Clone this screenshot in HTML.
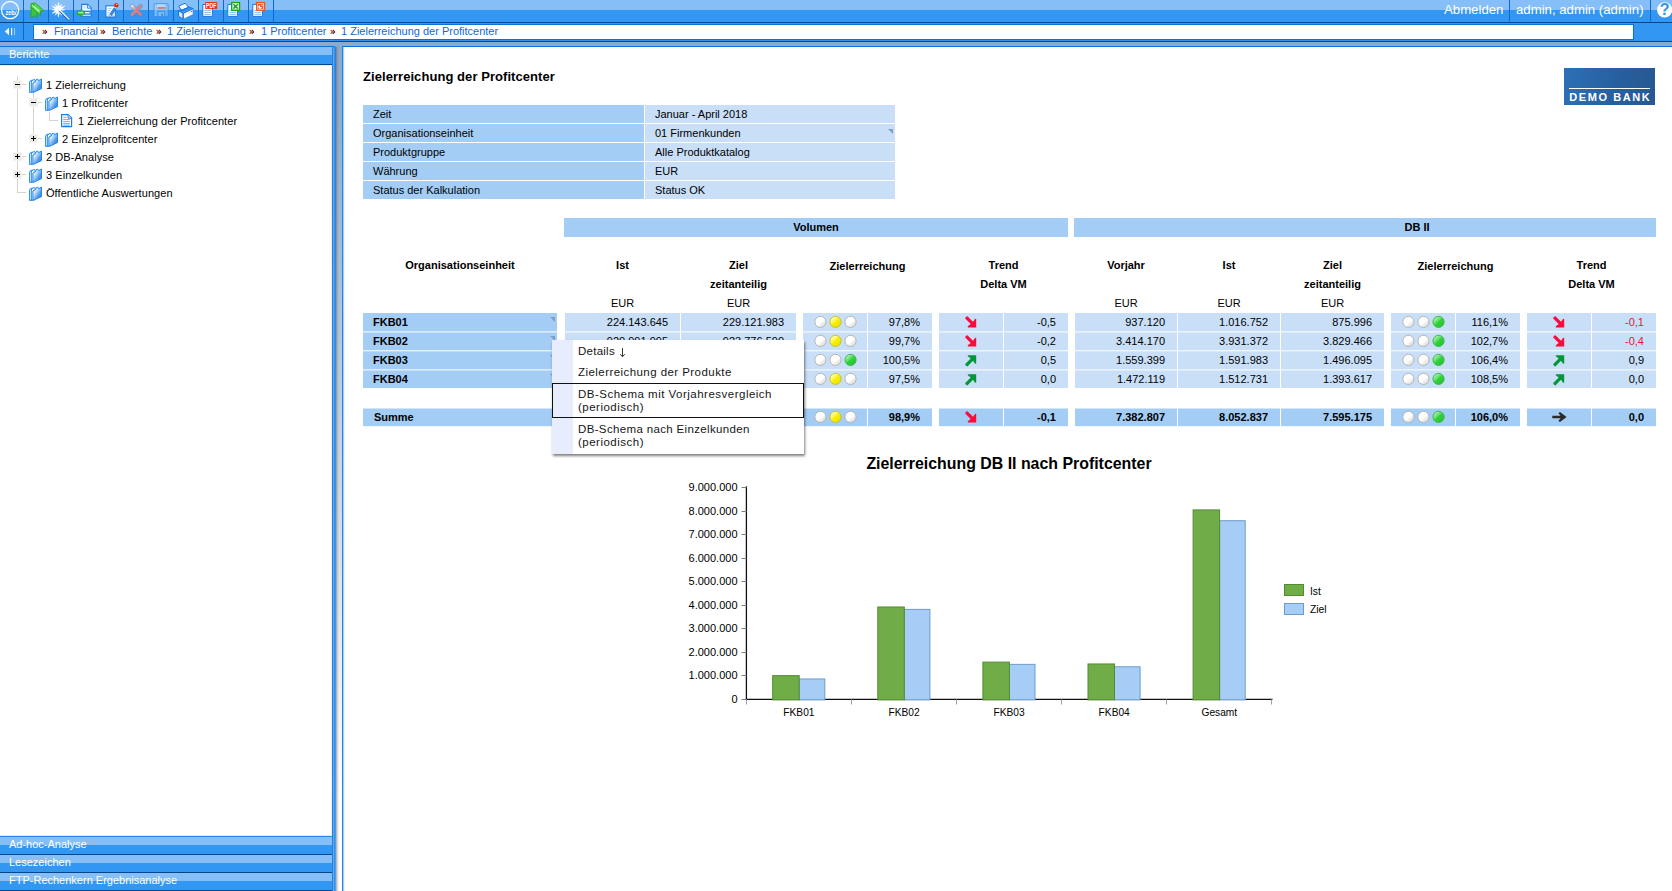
<!DOCTYPE html>
<html lang="de"><head><meta charset="utf-8"><title>Zielerreichung der Profitcenter</title>
<style>
html,body{margin:0;padding:0;}
body{width:1672px;height:891px;overflow:hidden;position:relative;background:#fff;font-family:"Liberation Sans",sans-serif;font-size:11px;color:#000;}
.abs{position:absolute;}
div,span{box-sizing:border-box;}
/* top bars */
#bar1{position:absolute;left:0;top:0;width:1672px;height:22px;background:#3197f2;}
#bar1 .lt{position:absolute;left:0;top:0;width:1672px;height:10px;background:#86bef7;}
#line1{position:absolute;left:0;top:22px;width:1672px;height:1px;background:#04468c;}
#bar2{position:absolute;left:0;top:23px;width:1672px;height:17px;background:#3197f2;}
#line2a{position:absolute;left:0;top:40px;width:1672px;height:1px;background:#2a95f5;}
#line2{position:absolute;left:0;top:41px;width:1672px;height:1px;background:#04468c;}
#strip{position:absolute;left:0;top:42px;width:1672px;height:4px;background:#8aabcd;}
.vsep{position:absolute;top:0;width:1px;height:22px;background:#0a6ad2;}
.vsep2{position:absolute;top:23px;width:1px;height:17px;background:#0a6ad2;}
#crumb{position:absolute;left:33px;top:24px;width:1601px;height:16px;background:#fff;border:1px solid #0b6fdc;font-size:11px;line-height:13px;color:#1268dc;white-space:nowrap;}
#crumb span{position:absolute;top:0;}
.toptxt{position:absolute;top:2px;height:16px;line-height:16px;font-size:13.2px;color:#fff;white-space:nowrap;}
/* left panel */
.acc{position:absolute;left:0;width:332px;height:17px;background:#3197f2;color:#fff;font-size:11px;}
.acc .lt{position:absolute;left:0;top:0;width:332px;height:8px;background:#86bef7;}
.acc span{position:absolute;left:9px;top:1px;line-height:13px;white-space:nowrap;}
.hl{position:absolute;height:1px;}
.tl{position:absolute;background:#d6d3ca;}
.tbox{position:absolute;width:9px;height:9px;background:#eceae5;border:1px solid #f4f3f0;}
.tbox i{position:absolute;left:1px;top:3px;width:5px;height:1px;background:#000;}
.tbox b{position:absolute;left:3px;top:1px;width:1px;height:5px;background:#000;}
.tn{position:absolute;letter-spacing:0.06px;font-size:11px;line-height:18px;height:18px;white-space:nowrap;color:#000;}
.ico{position:absolute;}
/* main */
#title{position:absolute;left:363px;top:69px;letter-spacing:0.06px;font-size:13px;font-weight:bold;line-height:16px;white-space:nowrap;}
.c{position:absolute;height:18px;line-height:18px;font-size:11px;white-space:nowrap;overflow:hidden;}
.k{background:#a3cdf4;}
.v{background:#c9dff7;}
.r{text-align:right;padding-right:12px;}
.ct{text-align:center;}
.b{font-weight:bold;}
.red{color:#ee1133;}
.tri{position:absolute;width:0;height:0;border-top:5px solid #7f9fc6;border-left:5px solid transparent;}
.h{position:absolute;height:18px;line-height:18px;font-size:11px;font-weight:bold;text-align:center;white-space:nowrap;}
.u{position:absolute;height:18px;line-height:18px;font-size:11px;text-align:center;white-space:nowrap;}
.dot{position:absolute;width:13px;height:13px;border-radius:50%;}
.dw{background:radial-gradient(circle at 35% 30%,#ffffff 0,#ffffff 45%,#dcdcdc 100%);border:1px solid #b4b4b4;}
.dy{background:radial-gradient(circle at 35% 28%,#ffffb0 0,#fbf400 35%,#ece400 100%);border:1px solid #c9c230;}
.dg{background:radial-gradient(circle at 35% 28%,#9dee9d 0,#30d23c 40%,#22c030 100%);border:1px solid #35b840;}
.arr{position:absolute;}
/* context menu */
#menu{position:absolute;left:552px;top:340px;width:252px;height:114px;background:#fff;box-shadow:1px 2px 2.5px rgba(0,0,0,0.5);font-size:11.5px;color:#161616;}
#menu .strip{position:absolute;left:0;top:0;width:21px;height:114px;background:#e8edfd;}
#menu .mi{position:absolute;left:26px;line-height:13px;white-space:nowrap;letter-spacing:0.55px;}
#menu .sel{position:absolute;left:0;top:43px;width:252px;height:35px;border:1px solid #111;}

</style></head>
<body>
<div id="bar1"><div class="lt"></div></div>
<div id="line1"></div>
<div id="bar2"></div>
<div id="line2a"></div><div id="line2"></div>
<div id="strip"></div>
<div class="vsep" style="left:23px"></div><div class="vsep" style="left:48px"></div><div class="vsep" style="left:73px"></div><div class="vsep" style="left:98px"></div><div class="vsep" style="left:123px"></div><div class="vsep" style="left:148px"></div><div class="vsep" style="left:173px"></div><div class="vsep" style="left:198px"></div><div class="vsep" style="left:223px"></div><div class="vsep" style="left:248px"></div><div class="vsep" style="left:273px"></div>
<div class="vsep" style="left:1509px"></div><div class="vsep" style="left:1650px"></div>
<div class="vsep2" style="left:23px"></div>
<div id="crumb"><span style="left:20px">Financial</span><span style="left:78px">Berichte</span><span style="left:133px">1 Zielerreichung</span><span style="left:227px">1 Profitcenter</span><span style="left:307px">1 Zielerreichung der Profitcenter</span></div>
<div class="toptxt" style="left:1444px">Abmelden</div>
<div class="toptxt" style="left:1516px">admin, admin (admin)</div>

<svg width="0" height="0" style="position:absolute"><defs><linearGradient id="cg" x1="0" y1="0" x2="1" y2="0"><stop offset="0" stop-color="#d87818"/><stop offset="0.45" stop-color="#7a3a30"/><stop offset="1" stop-color="#4a0838"/></linearGradient></defs></svg>
<svg class="abs" style="left:0px;top:0px" width="23" height="22" viewBox="0 0 23 22"><circle cx="10.1" cy="10.1" r="8.6" fill="none" stroke="#fff" stroke-width="1.3" opacity="0.95"/><text x="5.4" y="14.8" font-family="Liberation Sans, sans-serif" font-size="7.6" font-weight="bold" fill="#fff" textLength="9.4" lengthAdjust="spacingAndGlyphs">zeb</text><path d="M15.1 14.9 L16.4 10.6" stroke="#fff" stroke-width="0.8"/></svg>
<svg class="abs" style="left:24px;top:0px" width="24" height="22" viewBox="0 0 24 22"><path d="M7 6 L7 18 L9.9 15.6 L12.9 18 L12.9 10 Z" fill="#3cc43c" stroke="#2f9e22" stroke-width="0.9" stroke-linejoin="round"/><path d="M7.2 3.4 L11.4 3.1 L20 10.9 L16.2 11 L16.6 15.6 L7 7.2 Z" fill="#4fdc4a" stroke="#2f9e22" stroke-width="0.9" stroke-linejoin="round"/><path d="M8.3 5.2 L15.4 11.6" stroke="#c9f7c2" stroke-width="1.3" fill="none"/><circle cx="9.6" cy="5" r="0.8" fill="#2f9e22"/></svg>
<svg class="abs" style="left:49px;top:0px" width="24" height="22" viewBox="0 0 24 22"><polygon points="9.50,2.30 10.30,6.71 12.70,4.16 11.69,7.51 15.91,6.00 12.49,8.90 15.90,9.70 12.49,10.50 15.91,13.40 11.69,11.89 12.70,15.24 10.30,12.69 9.50,17.10 8.70,12.69 6.30,15.24 7.31,11.89 3.09,13.40 6.51,10.50 3.10,9.70 6.51,8.90 3.09,6.00 7.31,7.51 6.30,4.16 8.70,6.71" fill="#fff" stroke="#fff" stroke-width="0.5" stroke-linejoin="miter"/><path d="M10.6 10.2 L19.6 19.2" stroke="#1467dc" stroke-width="2.8" stroke-linecap="round"/><path d="M10.8 9.9 L19.9 18.9" stroke="#fff" stroke-width="1.4" stroke-linecap="round"/><path d="M12.4 10.6 L20 18.2" stroke="#4aa0f8" stroke-width="0.6"/><circle cx="10.6" cy="9.8" r="1.5" fill="#fff"/></svg>
<svg class="abs" style="left:74px;top:0px" width="24" height="22" viewBox="0 0 24 22"><path d="M7.7 4.4 H13.6 L17.2 8 V16.3 H7.7 Z" fill="#fff" stroke="#1a78e6" stroke-width="1.1" stroke-linejoin="round"/><path d="M13.4 4.6 V8.2 H17" fill="#d8e8fb" stroke="#1a78e6" stroke-width="0.9"/><path d="M9.2 6.2 H12.2 M9.2 8 H12.2" stroke="#b7d5f7" stroke-width="0.9"/><rect x="8.3" y="10.6" width="8.4" height="4.1" fill="#1a78e6"/><rect x="10.6" y="11.9" width="5" height="1.6" fill="#fbeee8"/><path d="M3.6 11.4 H7 V9.2 L10.8 12.9 L7 16.6 V14.4 H3.6 Z" fill="#4ee04a" stroke="#2d9a1e" stroke-width="0.9" stroke-linejoin="round"/><path d="M4.4 12.4 H8.4" stroke="#bdf6b4" stroke-width="1"/></svg>
<svg class="abs" style="left:99px;top:0px" width="24" height="22" viewBox="0 0 24 22"><rect x="6.9" y="5.8" width="9.4" height="11.2" fill="#fff" stroke="#1a78e6" stroke-width="1.1"/><path d="M8.6 8.4 H12.6 M8.6 10.4 H11.6 M8.6 12.4 H10.4 M8.6 14.2 H9.6 M8.6 15.6 H14.8" stroke="#7db4f0" stroke-width="0.7"/><path d="M10.6 14.4 L15.6 6.8 L17.6 8.1 L12.6 15.7 Z" fill="#2f86e8" stroke="#1a6ad2" stroke-width="0.5"/><path d="M10.6 14.4 L12.6 15.7 L10.3 16.7 Z" fill="#e8d86a"/><path d="M10.2 16.2 L11 16.6 L9.9 17.1 Z" fill="#222"/><path d="M15.4 7 L17.4 8.3" stroke="#fff" stroke-width="1.1"/><circle cx="17.3" cy="5.3" r="2.2" fill="#f81e08"/><circle cx="17.6" cy="4.4" r="0.7" fill="#ffd0c8"/></svg>
<svg class="abs" style="left:124px;top:0px" width="24" height="22" viewBox="0 0 24 22"><defs><linearGradient id="xg" x1="0" y1="0" x2="1" y2="1"><stop offset="0" stop-color="#e8d8e0"/><stop offset="0.45" stop-color="#d2818a"/><stop offset="1" stop-color="#d87a78"/></linearGradient></defs><path d="M8 6 L16.6 14.6 M16.6 6 L8 14.6" stroke="#2f8be6" stroke-width="4.4" stroke-linecap="round" opacity="0.55"/><path d="M8 6 L16.6 14.6 M16.6 6 L8 14.6" stroke="url(#xg)" stroke-width="2.9" stroke-linecap="round"/></svg>
<svg class="abs" style="left:149px;top:0px" width="24" height="22" viewBox="0 0 24 22"><g opacity="0.62"><rect x="5" y="3.6" width="14.2" height="13.2" rx="0.8" fill="#6db3f6" stroke="#2f8be6" stroke-width="1"/><rect x="5.8" y="4.4" width="1.8" height="11.6" fill="#b5d8fb"/><rect x="16.6" y="4.4" width="1.8" height="11.6" fill="#8cc3f8"/><rect x="8" y="4.2" width="8.4" height="5.4" fill="#cfe6fd"/><rect x="8.6" y="7" width="7.8" height="1.9" fill="#f0623a"/><rect x="9" y="11.4" width="6.4" height="5.2" fill="#a9d1fa" stroke="#3a92ec" stroke-width="0.8"/><rect x="12.4" y="13.6" width="1.3" height="3" fill="#3a70b0"/></g></svg>
<svg class="abs" style="left:174px;top:0px" width="24" height="22" viewBox="0 0 24 22"><path d="M4.6 6.2 L11 3.3 L14.6 7.2 L7.4 10.2 Z" fill="#fff" stroke="#1470e0" stroke-width="1" stroke-linejoin="round"/><path d="M4.6 10.6 L9.2 13.2 L9.2 19.4 L4.6 16.2 Z" fill="#d8eafc" stroke="#1470e0" stroke-width="1" stroke-linejoin="round"/><path d="M9.2 13.2 L19.2 8.6 L19.2 14.4 L9.2 19.4 Z" fill="#f2f2f2" stroke="#1470e0" stroke-width="0.6" stroke-linejoin="round"/><path d="M4.6 10.6 L7.2 9.6 L7.6 10.4 L14.8 7.4 L14.4 6.8 L19.2 8.6 L9.2 13.2 Z" fill="#5aa6f4" stroke="#1470e0" stroke-width="0.9" stroke-linejoin="round"/><path d="M6 11 L15.6 7.4 M7.4 11.9 L17.2 8" stroke="#1470e0" stroke-width="0.6"/><path d="M10.4 16.8 L18.2 13" stroke="#fff" stroke-width="1.6"/><path d="M16.6 11.4 L18.2 10.8 L18.2 12.6 Z" fill="#555"/><path d="M9.2 13.2 V19.4" stroke="#1470e0" stroke-width="1"/></svg>
<svg class="abs" style="left:199px;top:0px" width="24" height="22" viewBox="0 0 24 22"><path d="M3.8 4.4 H13.4 V16.4 H3.8 Z" fill="#fff" stroke="#1a78e6" stroke-width="1" stroke-linejoin="round"/><path d="M5.4 10.6 H12 M5.4 12.6 H12 M5.4 14.6 H12" stroke="#7fb6f2" stroke-width="0.9"/><rect x="6.2" y="2" width="12" height="6.9" fill="#e8340c"/><text x="7" y="7.9" font-family="Liberation Sans, sans-serif" font-size="6.6" font-weight="bold" fill="#fff" textLength="10.4" lengthAdjust="spacingAndGlyphs">PDF</text></svg>
<svg class="abs" style="left:224px;top:0px" width="24" height="22" viewBox="0 0 24 22"><path d="M3.8 4.4 H13.4 V16.4 H3.8 Z" fill="#fff" stroke="#1a78e6" stroke-width="1" stroke-linejoin="round"/><path d="M5.4 10.6 H12 M5.4 12.6 H12 M5.4 14.6 H12" stroke="#7fb6f2" stroke-width="0.9"/><rect x="7.7" y="2.6" width="7.8" height="7.6" fill="#fff" stroke="#12a81a" stroke-width="1.4"/><path d="M9.4 4.2 L13.8 8.6 M13.8 4.2 L9.4 8.6" stroke="#12a81a" stroke-width="1.5"/></svg>
<svg class="abs" style="left:249px;top:0px" width="24" height="22" viewBox="0 0 24 22"><path d="M3.8 4.4 H13.4 V16.4 H3.8 Z" fill="#fff" stroke="#1a78e6" stroke-width="1" stroke-linejoin="round"/><path d="M5.4 10.6 H12 M5.4 12.6 H12 M5.4 14.6 H12" stroke="#7fb6f2" stroke-width="0.9"/><rect x="7.7" y="2.6" width="7.8" height="7.6" fill="#fff" stroke="#f4501e" stroke-width="1.4"/><rect x="9" y="3.9" width="5.2" height="5" fill="#f4501e"/><path d="M11.4 4.8 V6.6 H13.2 A1.8 1.8 0 1 1 11.4 4.8 Z" fill="#fff" transform="translate(-0.3,0.5)"/><rect x="12.4" y="4.6" width="1.2" height="1.2" fill="#fff"/></svg>
<svg class="abs" style="left:0px;top:23px" width="23" height="17" viewBox="0 0 23 17"><path d="M4.8 8.5 L9 4.8 V12.2 Z" fill="#fff"/><rect x="11" y="5" width="1.2" height="7.2" fill="#fff"/><rect x="14" y="5" width="1" height="7.2" fill="#fff" opacity="0.55"/></svg>
<svg class="abs" style="left:1651px;top:0px" width="21" height="22" viewBox="0 0 21 22"><circle cx="13.6" cy="9.8" r="7.6" fill="#fff"/><text x="13.7" y="15.3" font-family="Liberation Sans, sans-serif" font-size="16" font-weight="bold" fill="#2f92ee" text-anchor="middle">?</text></svg>
<svg class="abs" style="left:42px;top:29px" width="6" height="6" viewBox="0 0 6 6"><path d="M0.6 0.9 L2.4 2.9 L0.6 4.9 M2.8 0.9 L4.6 2.9 L2.8 4.9" fill="none" stroke="url(#cg)" stroke-width="1.25"/></svg>
<svg class="abs" style="left:100px;top:29px" width="6" height="6" viewBox="0 0 6 6"><path d="M0.6 0.9 L2.4 2.9 L0.6 4.9 M2.8 0.9 L4.6 2.9 L2.8 4.9" fill="none" stroke="url(#cg)" stroke-width="1.25"/></svg>
<svg class="abs" style="left:156px;top:29px" width="6" height="6" viewBox="0 0 6 6"><path d="M0.6 0.9 L2.4 2.9 L0.6 4.9 M2.8 0.9 L4.6 2.9 L2.8 4.9" fill="none" stroke="url(#cg)" stroke-width="1.25"/></svg>
<svg class="abs" style="left:249px;top:29px" width="6" height="6" viewBox="0 0 6 6"><path d="M0.6 0.9 L2.4 2.9 L0.6 4.9 M2.8 0.9 L4.6 2.9 L2.8 4.9" fill="none" stroke="url(#cg)" stroke-width="1.25"/></svg>
<svg class="abs" style="left:330px;top:29px" width="6" height="6" viewBox="0 0 6 6"><path d="M0.6 0.9 L2.4 2.9 L0.6 4.9 M2.8 0.9 L4.6 2.9 L2.8 4.9" fill="none" stroke="url(#cg)" stroke-width="1.25"/></svg>
<div class="hl" style="left:0;top:46px;width:1672px;background:#0c72dc"></div>
<div class="acc" style="top:47px"><div class="lt"></div><span>Berichte</span></div>
<div class="hl" style="left:0;top:64px;width:332px;background:#04468c"></div>
<div class="hl" style="left:0;top:65px;width:332px;background:#f5eadc"></div>
<div class="hl" style="left:0;top:835px;width:332px;background:#f5e3cf"></div>
<div class="hl" style="left:0;top:836px;width:332px;background:#1f8af0"></div>
<div class="acc" style="top:837px"><div class="lt"></div><span>Ad-hoc-Analyse</span></div>
<div class="hl" style="left:0;top:854px;width:332px;background:#04468c"></div>
<div class="acc" style="top:855px"><div class="lt"></div><span>Lesezeichen</span></div>
<div class="hl" style="left:0;top:872px;width:332px;background:#04468c"></div>
<div class="acc" style="top:873px"><div class="lt"></div><span>FTP-Rechenkern Ergebnisanalyse</span></div>
<div class="hl" style="left:0;top:890px;width:332px;background:#04468c"></div>
<div class="abs" style="left:331px;top:65px;width:1px;height:771px;background:#f8e8d8"></div>
<div class="abs" style="left:332px;top:46px;width:1px;height:845px;background:#2a7fd6"></div>
<div class="abs" style="left:333px;top:47px;width:1px;height:844px;background:#5aa9f6"></div>
<div class="abs" style="left:334px;top:47px;width:1px;height:844px;background:#3093ee"></div>
<div class="abs" style="left:335px;top:42px;width:7px;height:849px;background:linear-gradient(to bottom,#8aabcd 0,#8aabcd 50px,#ffffff 760px,#ffffff 100%)"></div>
<div class="abs" style="left:335px;top:47px;width:1px;height:844px;background:linear-gradient(to bottom,#3a7cc4,#5a9ade)"></div><div class="abs" style="left:336px;top:47px;width:3px;height:844px;background:linear-gradient(to right,rgba(90,95,105,0.55),rgba(110,115,120,0.25) 50%,rgba(120,120,120,0) 100%)"></div>
<div class="abs" style="left:342px;top:46px;width:1px;height:845px;background:#2a82dc"></div>
<div class="abs" style="left:343px;top:47px;width:1px;height:844px;background:#a9cdf3"></div>
<div class="abs" style="left:344px;top:47px;width:1px;height:844px;background:#ecf4fd"></div>
<div class="tl" style="left:17px;top:76px;width:1px;height:117px"></div>
<div class="tl" style="left:17px;top:192px;width:9px;height:1px"></div>
<div class="tl" style="left:22px;top:84px;width:4px;height:1px"></div>
<div class="tl" style="left:22px;top:156px;width:4px;height:1px"></div>
<div class="tl" style="left:22px;top:174px;width:4px;height:1px"></div>
<div class="tl" style="left:33px;top:93px;width:1px;height:46px"></div>
<div class="tl" style="left:38px;top:102px;width:4px;height:1px"></div>
<div class="tl" style="left:38px;top:138px;width:4px;height:1px"></div>
<div class="tl" style="left:49px;top:112px;width:1px;height:9px"></div>
<div class="tl" style="left:49px;top:120px;width:9px;height:1px"></div>
<div class="tbox" style="left:13px;top:80px"><i></i></div>
<div class="tbox" style="left:29px;top:98px"><i></i></div>
<div class="tbox" style="left:29px;top:134px"><i></i><b></b></div>
<div class="tbox" style="left:13px;top:152px"><i></i><b></b></div>
<div class="tbox" style="left:13px;top:170px"><i></i><b></b></div>
<svg class="ico" style="left:29px;top:78px" width="14" height="16" viewBox="0 0 14 16"><defs><linearGradient id="fg1" x1="0" y1="0" x2="1" y2="1"><stop offset="0" stop-color="#ffffff"/><stop offset="0.3" stop-color="#d4e7fc"/><stop offset="0.62" stop-color="#5a9eea"/><stop offset="1" stop-color="#1d62c6"/></linearGradient></defs><path d="M0.6 4.2 Q0.6 3 1.8 2.6 L3.4 2 L3.4 13.2 L0.6 14.6 Z" fill="#fff" stroke="#1e88f0" stroke-width="1" stroke-linejoin="round"/><path d="M2.3 4 Q2.3 2.8 3.4 2.4 L5.6 1.4 L6.2 2.8 L6.2 12.6 L2.3 14.6 Z" fill="#f4f9ff" stroke="#1e88f0" stroke-width="1" stroke-linejoin="round"/><path d="M3.9 5 L6.4 3.8 L7 1.8 L8.8 1.2 L9.5 2.7 L12.5 1.1 L12.5 10.6 L3.9 14.6 Z" fill="url(#fg1)" stroke="#1e88f0" stroke-width="1" stroke-linejoin="round"/></svg>
<div class="tn" style="left:46px;top:76px">1 Zielerreichung</div>
<svg class="ico" style="left:45px;top:96px" width="14" height="16" viewBox="0 0 14 16"><defs><linearGradient id="fg2" x1="0" y1="0" x2="1" y2="1"><stop offset="0" stop-color="#ffffff"/><stop offset="0.3" stop-color="#d4e7fc"/><stop offset="0.62" stop-color="#5a9eea"/><stop offset="1" stop-color="#1d62c6"/></linearGradient></defs><path d="M0.6 4.2 Q0.6 3 1.8 2.6 L3.4 2 L3.4 13.2 L0.6 14.6 Z" fill="#fff" stroke="#1e88f0" stroke-width="1" stroke-linejoin="round"/><path d="M2.3 4 Q2.3 2.8 3.4 2.4 L5.6 1.4 L6.2 2.8 L6.2 12.6 L2.3 14.6 Z" fill="#f4f9ff" stroke="#1e88f0" stroke-width="1" stroke-linejoin="round"/><path d="M3.9 5 L6.4 3.8 L7 1.8 L8.8 1.2 L9.5 2.7 L12.5 1.1 L12.5 10.6 L3.9 14.6 Z" fill="url(#fg2)" stroke="#1e88f0" stroke-width="1" stroke-linejoin="round"/></svg>
<div class="tn" style="left:62px;top:94px">1 Profitcenter</div>
<svg class="ico" style="left:61px;top:114px" width="12" height="14" viewBox="0 0 12 14"><path d="M0.6 0.6 H7.2 L10.6 4 V12.6 H0.6 Z" fill="#fff" stroke="#1c7be4" stroke-width="1.2" stroke-linejoin="round"/><path d="M7 0.8 V4.2 H10.4" fill="#cfe4fb" stroke="#1c7be4" stroke-width="0.9"/><path d="M2.2 5.6 H8.8 M2.2 7.6 H8.8 M2.2 9.6 H8.8 M2.2 3.4 H5.4 M2.2 11.2 H8.8" stroke="#5aa2ee" stroke-width="0.9"/></svg>
<div class="tn" style="left:78px;top:112px">1 Zielerreichung der Profitcenter</div>
<svg class="ico" style="left:45px;top:132px" width="14" height="16" viewBox="0 0 14 16"><defs><linearGradient id="fg3" x1="0" y1="0" x2="1" y2="1"><stop offset="0" stop-color="#ffffff"/><stop offset="0.3" stop-color="#d4e7fc"/><stop offset="0.62" stop-color="#5a9eea"/><stop offset="1" stop-color="#1d62c6"/></linearGradient></defs><path d="M0.6 4.2 Q0.6 3 1.8 2.6 L3.4 2 L3.4 13.2 L0.6 14.6 Z" fill="#fff" stroke="#1e88f0" stroke-width="1" stroke-linejoin="round"/><path d="M2.3 4 Q2.3 2.8 3.4 2.4 L5.6 1.4 L6.2 2.8 L6.2 12.6 L2.3 14.6 Z" fill="#f4f9ff" stroke="#1e88f0" stroke-width="1" stroke-linejoin="round"/><path d="M3.9 5 L6.4 3.8 L7 1.8 L8.8 1.2 L9.5 2.7 L12.5 1.1 L12.5 10.6 L3.9 14.6 Z" fill="url(#fg3)" stroke="#1e88f0" stroke-width="1" stroke-linejoin="round"/></svg>
<div class="tn" style="left:62px;top:130px">2 Einzelprofitcenter</div>
<svg class="ico" style="left:29px;top:150px" width="14" height="16" viewBox="0 0 14 16"><defs><linearGradient id="fg4" x1="0" y1="0" x2="1" y2="1"><stop offset="0" stop-color="#ffffff"/><stop offset="0.3" stop-color="#d4e7fc"/><stop offset="0.62" stop-color="#5a9eea"/><stop offset="1" stop-color="#1d62c6"/></linearGradient></defs><path d="M0.6 4.2 Q0.6 3 1.8 2.6 L3.4 2 L3.4 13.2 L0.6 14.6 Z" fill="#fff" stroke="#1e88f0" stroke-width="1" stroke-linejoin="round"/><path d="M2.3 4 Q2.3 2.8 3.4 2.4 L5.6 1.4 L6.2 2.8 L6.2 12.6 L2.3 14.6 Z" fill="#f4f9ff" stroke="#1e88f0" stroke-width="1" stroke-linejoin="round"/><path d="M3.9 5 L6.4 3.8 L7 1.8 L8.8 1.2 L9.5 2.7 L12.5 1.1 L12.5 10.6 L3.9 14.6 Z" fill="url(#fg4)" stroke="#1e88f0" stroke-width="1" stroke-linejoin="round"/></svg>
<div class="tn" style="left:46px;top:148px">2 DB-Analyse</div>
<svg class="ico" style="left:29px;top:168px" width="14" height="16" viewBox="0 0 14 16"><defs><linearGradient id="fg5" x1="0" y1="0" x2="1" y2="1"><stop offset="0" stop-color="#ffffff"/><stop offset="0.3" stop-color="#d4e7fc"/><stop offset="0.62" stop-color="#5a9eea"/><stop offset="1" stop-color="#1d62c6"/></linearGradient></defs><path d="M0.6 4.2 Q0.6 3 1.8 2.6 L3.4 2 L3.4 13.2 L0.6 14.6 Z" fill="#fff" stroke="#1e88f0" stroke-width="1" stroke-linejoin="round"/><path d="M2.3 4 Q2.3 2.8 3.4 2.4 L5.6 1.4 L6.2 2.8 L6.2 12.6 L2.3 14.6 Z" fill="#f4f9ff" stroke="#1e88f0" stroke-width="1" stroke-linejoin="round"/><path d="M3.9 5 L6.4 3.8 L7 1.8 L8.8 1.2 L9.5 2.7 L12.5 1.1 L12.5 10.6 L3.9 14.6 Z" fill="url(#fg5)" stroke="#1e88f0" stroke-width="1" stroke-linejoin="round"/></svg>
<div class="tn" style="left:46px;top:166px">3 Einzelkunden</div>
<svg class="ico" style="left:29px;top:186px" width="14" height="16" viewBox="0 0 14 16"><defs><linearGradient id="fg6" x1="0" y1="0" x2="1" y2="1"><stop offset="0" stop-color="#ffffff"/><stop offset="0.3" stop-color="#d4e7fc"/><stop offset="0.62" stop-color="#5a9eea"/><stop offset="1" stop-color="#1d62c6"/></linearGradient></defs><path d="M0.6 4.2 Q0.6 3 1.8 2.6 L3.4 2 L3.4 13.2 L0.6 14.6 Z" fill="#fff" stroke="#1e88f0" stroke-width="1" stroke-linejoin="round"/><path d="M2.3 4 Q2.3 2.8 3.4 2.4 L5.6 1.4 L6.2 2.8 L6.2 12.6 L2.3 14.6 Z" fill="#f4f9ff" stroke="#1e88f0" stroke-width="1" stroke-linejoin="round"/><path d="M3.9 5 L6.4 3.8 L7 1.8 L8.8 1.2 L9.5 2.7 L12.5 1.1 L12.5 10.6 L3.9 14.6 Z" fill="url(#fg6)" stroke="#1e88f0" stroke-width="1" stroke-linejoin="round"/></svg>
<div class="tn" style="left:46px;top:184px">Öffentliche Auswertungen</div>
<svg width="0" height="0" style="position:absolute"><defs>
<linearGradient id="gW" x1="0.15" y1="0.1" x2="0.9" y2="0.95"><stop offset="0" stop-color="#ffffff"/><stop offset="0.55" stop-color="#ffffff"/><stop offset="0.62" stop-color="#f0f0f0"/><stop offset="1" stop-color="#dadada"/></linearGradient>
<linearGradient id="gY" x1="0.15" y1="0.1" x2="0.9" y2="0.95"><stop offset="0" stop-color="#ffffc0"/><stop offset="0.36" stop-color="#fbf84a"/><stop offset="0.46" stop-color="#f7f000"/><stop offset="1" stop-color="#e9e000"/></linearGradient>
<linearGradient id="gG" x1="0.15" y1="0.1" x2="0.9" y2="0.95"><stop offset="0" stop-color="#b4f2b4"/><stop offset="0.36" stop-color="#62de6a"/><stop offset="0.46" stop-color="#2fd23c"/><stop offset="1" stop-color="#25c232"/></linearGradient>
</defs></svg>
<div id="title">Zielerreichung der Profitcenter</div>
<div class="abs" style="left:1564px;top:68px;width:91px;height:37px;background:linear-gradient(100deg,#2d70b6 0,#27609f 55%,#265890 100%)"><div class="abs" style="left:5px;top:20px;width:81px;height:1px;background:#fff"></div><div class="abs" style="left:0;top:23px;width:91px;text-align:center;font-size:11px;line-height:12px;font-weight:bold;color:#fff;letter-spacing:1.55px;padding-left:1.5px;white-space:nowrap;transform:scaleY(0.92)">DEMO BANK</div></div>
<div class="c k" style="left:363px;top:105px;width:281px;padding-left:10px">Zeit</div>
<div class="c v" style="left:645px;top:105px;width:250px;padding-left:10px">Januar - April 2018</div>
<div class="c k" style="left:363px;top:124px;width:281px;padding-left:10px">Organisationseinheit</div>
<div class="c v" style="left:645px;top:124px;width:250px;padding-left:10px">01 Firmenkunden</div>
<div class="c k" style="left:363px;top:143px;width:281px;padding-left:10px">Produktgruppe</div>
<div class="c v" style="left:645px;top:143px;width:250px;padding-left:10px">Alle Produktkatalog</div>
<div class="c k" style="left:363px;top:162px;width:281px;padding-left:10px">Währung</div>
<div class="c v" style="left:645px;top:162px;width:250px;padding-left:10px">EUR</div>
<div class="c k" style="left:363px;top:181px;width:281px;padding-left:10px">Status der Kalkulation</div>
<div class="c v" style="left:645px;top:181px;width:250px;padding-left:10px">Status OK</div>
<div class="tri" style="left:888px;top:129px"></div>
<div class="c k ct b" style="left:564px;top:218px;width:504px;height:19px">Volumen</div>
<div class="c k b" style="left:1074px;top:218px;width:582px;height:19px"><span style="position:absolute;left:293px;width:100px;text-align:center">DB II</span></div>
<div class="h" style="left:363px;top:256px;width:194px">Organisationseinheit</div>
<div class="h" style="left:565px;top:256px;width:115px">Ist</div>
<div class="h" style="left:681px;top:256px;width:115px">Ziel</div>
<div class="h" style="left:681px;top:275px;width:115px">zeitanteilig</div>
<div class="h" style="left:803px;top:257px;width:129px">Zielerreichung</div>
<div class="h" style="left:939px;top:256px;width:129px">Trend</div>
<div class="h" style="left:939px;top:275px;width:129px">Delta VM</div>
<div class="u" style="left:565px;top:294px;width:115px">EUR</div>
<div class="u" style="left:681px;top:294px;width:115px">EUR</div>
<div class="h" style="left:1075px;top:256px;width:102px">Vorjahr</div>
<div class="h" style="left:1178px;top:256px;width:102px">Ist</div>
<div class="h" style="left:1281px;top:256px;width:103px">Ziel</div>
<div class="h" style="left:1281px;top:275px;width:103px">zeitanteilig</div>
<div class="h" style="left:1391px;top:257px;width:129px">Zielerreichung</div>
<div class="h" style="left:1527px;top:256px;width:129px">Trend</div>
<div class="h" style="left:1527px;top:275px;width:129px">Delta VM</div>
<div class="u" style="left:1075px;top:294px;width:102px">EUR</div>
<div class="u" style="left:1178px;top:294px;width:102px">EUR</div>
<div class="u" style="left:1281px;top:294px;width:103px">EUR</div>
<div class="c k b" style="left:363px;top:313px;width:194px;padding-left:10px;height:19px">FKB01</div>
<div class="tri" style="left:550px;top:317px"></div>
<div class="c v r" style="left:565px;top:313px;width:115px;height:19px">224.143.645</div>
<div class="c v r" style="left:681px;top:313px;width:115px;height:19px">229.121.983</div>
<div class="c v r" style="left:803px;top:313px;width:64px;height:19px"></div>
<svg class="abs" style="left:803px;top:313px" width="64" height="18" viewBox="0 0 64 18"><circle cx="17.45" cy="8.90" r="5.6" fill="url(#gW)" stroke="#b5b5b5" stroke-width="1"/><circle cx="32.50" cy="8.90" r="5.6" fill="url(#gY)" stroke="#c6c03a" stroke-width="1"/><circle cx="47.55" cy="8.90" r="5.6" fill="url(#gW)" stroke="#b5b5b5" stroke-width="1"/></svg>
<div class="c v r" style="left:868px;top:313px;width:64px;height:19px">97,8%</div>
<div class="c v r" style="left:939px;top:313px;width:64px;height:19px"></div>
<svg class="arr" style="left:965px;top:316px" width="13" height="13" viewBox="0 0 13 13"><path d="M2.4 0.2 L8 5.8 L9.8 3.2 Q10.4 2.6 11.2 3 L11.2 11.4 L2.9 11.4 Q2.4 10.6 3.1 10 L5.7 8.1 L0.2 2.5 Q0.2 0.5 2.4 0.2 Z" fill="#fc0a3c"/></svg>
<div class="c v r" style="left:1004px;top:313px;width:64px;height:19px">-0,5</div>
<div class="c v r" style="left:1075px;top:313px;width:102px;height:19px">937.120</div>
<div class="c v r" style="left:1178px;top:313px;width:102px;height:19px">1.016.752</div>
<div class="c v r" style="left:1281px;top:313px;width:103px;height:19px">875.996</div>
<div class="c v r" style="left:1391px;top:313px;width:64px;height:19px"></div>
<svg class="abs" style="left:1391px;top:313px" width="64" height="18" viewBox="0 0 64 18"><circle cx="17.45" cy="8.90" r="5.6" fill="url(#gW)" stroke="#b5b5b5" stroke-width="1"/><circle cx="32.50" cy="8.90" r="5.6" fill="url(#gW)" stroke="#b5b5b5" stroke-width="1"/><circle cx="47.55" cy="8.90" r="5.6" fill="url(#gG)" stroke="#3fb94a" stroke-width="1"/></svg>
<div class="c v r" style="left:1456px;top:313px;width:64px;height:19px">116,1%</div>
<div class="c v r" style="left:1527px;top:313px;width:64px;height:19px"></div>
<svg class="arr" style="left:1553px;top:316px" width="13" height="13" viewBox="0 0 13 13"><path d="M2.4 0.2 L8 5.8 L9.8 3.2 Q10.4 2.6 11.2 3 L11.2 11.4 L2.9 11.4 Q2.4 10.6 3.1 10 L5.7 8.1 L0.2 2.5 Q0.2 0.5 2.4 0.2 Z" fill="#fc0a3c"/></svg>
<div class="c v r red" style="left:1592px;top:313px;width:64px;height:19px">-0,1</div>
<div class="c k b" style="left:363px;top:332px;width:194px;padding-left:10px;height:19px">FKB02</div>
<div class="tri" style="left:550px;top:336px"></div>
<div class="c v r" style="left:565px;top:332px;width:115px;height:19px">920.991.995</div>
<div class="c v r" style="left:681px;top:332px;width:115px;height:19px">923.776.590</div>
<div class="c v r" style="left:803px;top:332px;width:64px;height:19px"></div>
<svg class="abs" style="left:803px;top:332px" width="64" height="18" viewBox="0 0 64 18"><circle cx="17.45" cy="8.90" r="5.6" fill="url(#gW)" stroke="#b5b5b5" stroke-width="1"/><circle cx="32.50" cy="8.90" r="5.6" fill="url(#gY)" stroke="#c6c03a" stroke-width="1"/><circle cx="47.55" cy="8.90" r="5.6" fill="url(#gW)" stroke="#b5b5b5" stroke-width="1"/></svg>
<div class="c v r" style="left:868px;top:332px;width:64px;height:19px">99,7%</div>
<div class="c v r" style="left:939px;top:332px;width:64px;height:19px"></div>
<svg class="arr" style="left:965px;top:335px" width="13" height="13" viewBox="0 0 13 13"><path d="M2.4 0.2 L8 5.8 L9.8 3.2 Q10.4 2.6 11.2 3 L11.2 11.4 L2.9 11.4 Q2.4 10.6 3.1 10 L5.7 8.1 L0.2 2.5 Q0.2 0.5 2.4 0.2 Z" fill="#fc0a3c"/></svg>
<div class="c v r" style="left:1004px;top:332px;width:64px;height:19px">-0,2</div>
<div class="c v r" style="left:1075px;top:332px;width:102px;height:19px">3.414.170</div>
<div class="c v r" style="left:1178px;top:332px;width:102px;height:19px">3.931.372</div>
<div class="c v r" style="left:1281px;top:332px;width:103px;height:19px">3.829.466</div>
<div class="c v r" style="left:1391px;top:332px;width:64px;height:19px"></div>
<svg class="abs" style="left:1391px;top:332px" width="64" height="18" viewBox="0 0 64 18"><circle cx="17.45" cy="8.90" r="5.6" fill="url(#gW)" stroke="#b5b5b5" stroke-width="1"/><circle cx="32.50" cy="8.90" r="5.6" fill="url(#gW)" stroke="#b5b5b5" stroke-width="1"/><circle cx="47.55" cy="8.90" r="5.6" fill="url(#gG)" stroke="#3fb94a" stroke-width="1"/></svg>
<div class="c v r" style="left:1456px;top:332px;width:64px;height:19px">102,7%</div>
<div class="c v r" style="left:1527px;top:332px;width:64px;height:19px"></div>
<svg class="arr" style="left:1553px;top:335px" width="13" height="13" viewBox="0 0 13 13"><path d="M2.4 0.2 L8 5.8 L9.8 3.2 Q10.4 2.6 11.2 3 L11.2 11.4 L2.9 11.4 Q2.4 10.6 3.1 10 L5.7 8.1 L0.2 2.5 Q0.2 0.5 2.4 0.2 Z" fill="#fc0a3c"/></svg>
<div class="c v r red" style="left:1592px;top:332px;width:64px;height:19px">-0,4</div>
<div class="c k b" style="left:363px;top:351px;width:194px;padding-left:10px;height:19px">FKB03</div>
<div class="tri" style="left:550px;top:355px"></div>
<div class="c v r" style="left:565px;top:351px;width:115px;height:19px">415.882.365</div>
<div class="c v r" style="left:681px;top:351px;width:115px;height:19px">413.779.520</div>
<div class="c v r" style="left:803px;top:351px;width:64px;height:19px"></div>
<svg class="abs" style="left:803px;top:351px" width="64" height="18" viewBox="0 0 64 18"><circle cx="17.45" cy="8.90" r="5.6" fill="url(#gW)" stroke="#b5b5b5" stroke-width="1"/><circle cx="32.50" cy="8.90" r="5.6" fill="url(#gW)" stroke="#b5b5b5" stroke-width="1"/><circle cx="47.55" cy="8.90" r="5.6" fill="url(#gG)" stroke="#3fb94a" stroke-width="1"/></svg>
<div class="c v r" style="left:868px;top:351px;width:64px;height:19px">100,5%</div>
<div class="c v r" style="left:939px;top:351px;width:64px;height:19px"></div>
<svg class="arr" style="left:965px;top:354px" width="13" height="14" viewBox="0 0 13 14"><path d="M2.4 12.4 L8 6.8 L9.8 9.4 Q10.4 10 11.2 9.6 L11.2 1.2 L2.9 1.2 Q2.4 2 3.1 2.6 L5.7 4.5 L0.2 10.1 Q0.2 12.1 2.4 12.4 Z" fill="#05963a"/></svg>
<div class="c v r" style="left:1004px;top:351px;width:64px;height:19px">0,5</div>
<div class="c v r" style="left:1075px;top:351px;width:102px;height:19px">1.559.399</div>
<div class="c v r" style="left:1178px;top:351px;width:102px;height:19px">1.591.983</div>
<div class="c v r" style="left:1281px;top:351px;width:103px;height:19px">1.496.095</div>
<div class="c v r" style="left:1391px;top:351px;width:64px;height:19px"></div>
<svg class="abs" style="left:1391px;top:351px" width="64" height="18" viewBox="0 0 64 18"><circle cx="17.45" cy="8.90" r="5.6" fill="url(#gW)" stroke="#b5b5b5" stroke-width="1"/><circle cx="32.50" cy="8.90" r="5.6" fill="url(#gW)" stroke="#b5b5b5" stroke-width="1"/><circle cx="47.55" cy="8.90" r="5.6" fill="url(#gG)" stroke="#3fb94a" stroke-width="1"/></svg>
<div class="c v r" style="left:1456px;top:351px;width:64px;height:19px">106,4%</div>
<div class="c v r" style="left:1527px;top:351px;width:64px;height:19px"></div>
<svg class="arr" style="left:1553px;top:354px" width="13" height="14" viewBox="0 0 13 14"><path d="M2.4 12.4 L8 6.8 L9.8 9.4 Q10.4 10 11.2 9.6 L11.2 1.2 L2.9 1.2 Q2.4 2 3.1 2.6 L5.7 4.5 L0.2 10.1 Q0.2 12.1 2.4 12.4 Z" fill="#05963a"/></svg>
<div class="c v r" style="left:1592px;top:351px;width:64px;height:19px">0,9</div>
<div class="c k b" style="left:363px;top:370px;width:194px;padding-left:10px">FKB04</div>
<div class="tri" style="left:550px;top:374px"></div>
<div class="c v r" style="left:565px;top:370px;width:115px">388.512.300</div>
<div class="c v r" style="left:681px;top:370px;width:115px">398.455.210</div>
<div class="c v r" style="left:803px;top:370px;width:64px"></div>
<svg class="abs" style="left:803px;top:370px" width="64" height="18" viewBox="0 0 64 18"><circle cx="17.45" cy="8.90" r="5.6" fill="url(#gW)" stroke="#b5b5b5" stroke-width="1"/><circle cx="32.50" cy="8.90" r="5.6" fill="url(#gY)" stroke="#c6c03a" stroke-width="1"/><circle cx="47.55" cy="8.90" r="5.6" fill="url(#gW)" stroke="#b5b5b5" stroke-width="1"/></svg>
<div class="c v r" style="left:868px;top:370px;width:64px">97,5%</div>
<div class="c v r" style="left:939px;top:370px;width:64px"></div>
<svg class="arr" style="left:965px;top:373px" width="13" height="14" viewBox="0 0 13 14"><path d="M2.4 12.4 L8 6.8 L9.8 9.4 Q10.4 10 11.2 9.6 L11.2 1.2 L2.9 1.2 Q2.4 2 3.1 2.6 L5.7 4.5 L0.2 10.1 Q0.2 12.1 2.4 12.4 Z" fill="#05963a"/></svg>
<div class="c v r" style="left:1004px;top:370px;width:64px">0,0</div>
<div class="c v r" style="left:1075px;top:370px;width:102px">1.472.119</div>
<div class="c v r" style="left:1178px;top:370px;width:102px">1.512.731</div>
<div class="c v r" style="left:1281px;top:370px;width:103px">1.393.617</div>
<div class="c v r" style="left:1391px;top:370px;width:64px"></div>
<svg class="abs" style="left:1391px;top:370px" width="64" height="18" viewBox="0 0 64 18"><circle cx="17.45" cy="8.90" r="5.6" fill="url(#gW)" stroke="#b5b5b5" stroke-width="1"/><circle cx="32.50" cy="8.90" r="5.6" fill="url(#gW)" stroke="#b5b5b5" stroke-width="1"/><circle cx="47.55" cy="8.90" r="5.6" fill="url(#gG)" stroke="#3fb94a" stroke-width="1"/></svg>
<div class="c v r" style="left:1456px;top:370px;width:64px">108,5%</div>
<div class="c v r" style="left:1527px;top:370px;width:64px"></div>
<svg class="arr" style="left:1553px;top:373px" width="13" height="14" viewBox="0 0 13 14"><path d="M2.4 12.4 L8 6.8 L9.8 9.4 Q10.4 10 11.2 9.6 L11.2 1.2 L2.9 1.2 Q2.4 2 3.1 2.6 L5.7 4.5 L0.2 10.1 Q0.2 12.1 2.4 12.4 Z" fill="#05963a"/></svg>
<div class="c v r" style="left:1592px;top:370px;width:64px">0,0</div>
<div class="c k b" style="left:363px;top:408px;width:194px;padding-left:11px;height:19px">Summe</div>
<div class="c k r b" style="left:565px;top:408px;width:115px;height:19px">1.949.530.305</div>
<div class="c k r b" style="left:681px;top:408px;width:115px;height:19px">1.965.133.303</div>
<div class="c k r b" style="left:803px;top:408px;width:64px;height:19px"></div>
<svg class="abs" style="left:803px;top:408px" width="64" height="18" viewBox="0 0 64 18"><circle cx="17.45" cy="8.90" r="5.6" fill="url(#gW)" stroke="#b5b5b5" stroke-width="1"/><circle cx="32.50" cy="8.90" r="5.6" fill="url(#gY)" stroke="#c6c03a" stroke-width="1"/><circle cx="47.55" cy="8.90" r="5.6" fill="url(#gW)" stroke="#b5b5b5" stroke-width="1"/></svg>
<div class="c k r b" style="left:868px;top:408px;width:64px;height:19px">98,9%</div>
<div class="c k r b" style="left:939px;top:408px;width:64px;height:19px"></div>
<svg class="arr" style="left:965px;top:411px" width="13" height="13" viewBox="0 0 13 13"><path d="M2.4 0.2 L8 5.8 L9.8 3.2 Q10.4 2.6 11.2 3 L11.2 11.4 L2.9 11.4 Q2.4 10.6 3.1 10 L5.7 8.1 L0.2 2.5 Q0.2 0.5 2.4 0.2 Z" fill="#fc0a3c"/></svg>
<div class="c k r b" style="left:1004px;top:408px;width:64px;height:19px">-0,1</div>
<div class="c k r b" style="left:1075px;top:408px;width:102px;height:19px">7.382.807</div>
<div class="c k r b" style="left:1178px;top:408px;width:102px;height:19px">8.052.837</div>
<div class="c k r b" style="left:1281px;top:408px;width:103px;height:19px">7.595.175</div>
<div class="c k r b" style="left:1391px;top:408px;width:64px;height:19px"></div>
<svg class="abs" style="left:1391px;top:408px" width="64" height="18" viewBox="0 0 64 18"><circle cx="17.45" cy="8.90" r="5.6" fill="url(#gW)" stroke="#b5b5b5" stroke-width="1"/><circle cx="32.50" cy="8.90" r="5.6" fill="url(#gW)" stroke="#b5b5b5" stroke-width="1"/><circle cx="47.55" cy="8.90" r="5.6" fill="url(#gG)" stroke="#3fb94a" stroke-width="1"/></svg>
<div class="c k r b" style="left:1456px;top:408px;width:64px;height:19px">106,0%</div>
<div class="c k r b" style="left:1527px;top:408px;width:64px;height:19px"></div>
<svg class="arr" style="left:1552px;top:412px" width="15" height="10" viewBox="0 0 15 10"><path d="M0.3 3.7 H8.6 L6.4 1.2 L8 0.1 L14.6 5 L8 9.9 L6.4 8.8 L8.6 6.3 H0.3 Z" fill="#2b2b2b"/></svg>
<div class="c k r b" style="left:1592px;top:408px;width:64px;height:19px">0,0</div>
<div class="abs" style="left:363px;top:331px;width:1293px;height:1px;background:rgba(255,255,255,0.60)"></div><div class="abs" style="left:363px;top:332px;width:1293px;height:1px;background:rgba(255,255,255,0.40)"></div><div class="abs" style="left:363px;top:350px;width:1293px;height:1px;background:rgba(255,255,255,0.70)"></div><div class="abs" style="left:363px;top:351px;width:1293px;height:1px;background:rgba(255,255,255,0.30)"></div><div class="abs" style="left:363px;top:369px;width:1293px;height:1px;background:rgba(255,255,255,0.60)"></div><div class="abs" style="left:363px;top:370px;width:1293px;height:1px;background:rgba(255,255,255,0.40)"></div><div class="abs" style="left:363px;top:408px;width:1293px;height:1px;background:rgba(255,255,255,0.50)"></div><div class="abs" style="left:363px;top:426px;width:1293px;height:1px;background:rgba(255,255,255,0.80)"></div>
<svg class="abs" style="left:660px;top:445px" width="700" height="290" viewBox="0 0 700 290" font-family="Liberation Sans, sans-serif">
<text x="349.0" y="24.0" font-size="15.9" font-weight="bold" text-anchor="middle" fill="#000">Zielerreichung DB II nach Profitcenter</text>
<line x1="86.4" y1="41.3" x2="86.4" y2="254.8" stroke="#111" stroke-width="1.3"/>
<line x1="85.6" y1="254.3" x2="612.5" y2="254.3" stroke="#111" stroke-width="1.3"/>
<text x="77.5" y="258.0" font-size="11" text-anchor="end" fill="#000">0</text>
<line x1="81.5" y1="254.50" x2="86.5" y2="254.50" stroke="#808080" stroke-width="1"/>
<text x="77.5" y="234.4" font-size="11" text-anchor="end" fill="#000">1.000.000</text>
<line x1="81.5" y1="230.50" x2="86.5" y2="230.50" stroke="#808080" stroke-width="1"/>
<text x="77.5" y="210.9" font-size="11" text-anchor="end" fill="#000">2.000.000</text>
<line x1="81.5" y1="207.50" x2="86.5" y2="207.50" stroke="#808080" stroke-width="1"/>
<text x="77.5" y="187.3" font-size="11" text-anchor="end" fill="#000">3.000.000</text>
<line x1="81.5" y1="183.50" x2="86.5" y2="183.50" stroke="#808080" stroke-width="1"/>
<text x="77.5" y="163.8" font-size="11" text-anchor="end" fill="#000">4.000.000</text>
<line x1="81.5" y1="160.50" x2="86.5" y2="160.50" stroke="#808080" stroke-width="1"/>
<text x="77.5" y="140.2" font-size="11" text-anchor="end" fill="#000">5.000.000</text>
<line x1="81.5" y1="136.50" x2="86.5" y2="136.50" stroke="#808080" stroke-width="1"/>
<text x="77.5" y="116.7" font-size="11" text-anchor="end" fill="#000">6.000.000</text>
<line x1="81.5" y1="113.50" x2="86.5" y2="113.50" stroke="#808080" stroke-width="1"/>
<text x="77.5" y="93.1" font-size="11" text-anchor="end" fill="#000">7.000.000</text>
<line x1="81.5" y1="89.50" x2="86.5" y2="89.50" stroke="#808080" stroke-width="1"/>
<text x="77.5" y="69.6" font-size="11" text-anchor="end" fill="#000">8.000.000</text>
<line x1="81.5" y1="66.50" x2="86.5" y2="66.50" stroke="#808080" stroke-width="1"/>
<text x="77.5" y="46.0" font-size="11" text-anchor="end" fill="#000">9.000.000</text>
<line x1="81.5" y1="42.50" x2="86.5" y2="42.50" stroke="#808080" stroke-width="1"/>
<rect x="139.20" y="233.97" width="25.60" height="20.93" fill="#a5cdf5" stroke="#6f9ccc" stroke-width="1"/>
<rect x="112.70" y="230.65" width="26.50" height="24.25" fill="#70ad47" stroke="#528c32" stroke-width="1"/>
<text x="138.9" y="271.0" font-size="10.2" text-anchor="middle" fill="#000">FKB01</text>
<rect x="244.30" y="164.39" width="25.60" height="90.51" fill="#a5cdf5" stroke="#6f9ccc" stroke-width="1"/>
<rect x="217.80" y="161.99" width="26.50" height="92.91" fill="#70ad47" stroke="#528c32" stroke-width="1"/>
<text x="244.0" y="271.0" font-size="10.2" text-anchor="middle" fill="#000">FKB02</text>
<rect x="349.40" y="219.36" width="25.60" height="35.54" fill="#a5cdf5" stroke="#6f9ccc" stroke-width="1"/>
<rect x="322.90" y="217.10" width="26.50" height="37.80" fill="#70ad47" stroke="#528c32" stroke-width="1"/>
<text x="349.1" y="271.0" font-size="10.2" text-anchor="middle" fill="#000">FKB03</text>
<rect x="454.50" y="221.77" width="25.60" height="33.13" fill="#a5cdf5" stroke="#6f9ccc" stroke-width="1"/>
<rect x="428.00" y="218.97" width="26.50" height="35.93" fill="#70ad47" stroke="#528c32" stroke-width="1"/>
<text x="454.2" y="271.0" font-size="10.2" text-anchor="middle" fill="#000">FKB04</text>
<rect x="559.60" y="75.69" width="25.60" height="179.21" fill="#a5cdf5" stroke="#6f9ccc" stroke-width="1"/>
<rect x="533.10" y="64.91" width="26.50" height="189.99" fill="#70ad47" stroke="#528c32" stroke-width="1"/>
<text x="559.3" y="271.0" font-size="10.2" text-anchor="middle" fill="#000">Gesamt</text>
<line x1="86.5" y1="254.5" x2="86.5" y2="259.5" stroke="#a0a0a0" stroke-width="1"/>
<line x1="191.5" y1="254.5" x2="191.5" y2="259.5" stroke="#a0a0a0" stroke-width="1"/>
<line x1="296.5" y1="254.5" x2="296.5" y2="259.5" stroke="#a0a0a0" stroke-width="1"/>
<line x1="401.5" y1="254.5" x2="401.5" y2="259.5" stroke="#a0a0a0" stroke-width="1"/>
<line x1="506.5" y1="254.5" x2="506.5" y2="259.5" stroke="#a0a0a0" stroke-width="1"/>
<line x1="611.5" y1="254.5" x2="611.5" y2="259.5" stroke="#a0a0a0" stroke-width="1"/>
<rect x="624.5" y="139.5" width="19" height="11" fill="#70ad47" stroke="#528c32"/>
<rect x="624.5" y="158.5" width="19" height="11" fill="#a5cdf5" stroke="#6f9ccc"/>
<text x="650.0" y="149.5" font-size="10.3" fill="#000">Ist</text>
<text x="650.0" y="167.5" font-size="10.3" fill="#000">Ziel</text>
</svg>
<div id="menu"><div class="strip"></div>
<div class="mi" style="top:5px;letter-spacing:0.25px">Details</div><svg class="abs" style="left:67px;top:8px" width="7" height="10" viewBox="0 0 7 10"><path d="M3.5 0 V8.6 M1.3 6.2 L3.5 8.8 L5.7 6.2" fill="none" stroke="#333" stroke-width="1"/></svg>
<div class="mi" style="top:26px;letter-spacing:0.44px">Zielerreichung der Produkte</div>
<div class="sel"></div>
<div class="mi" style="top:48px;letter-spacing:0.49px">DB-Schema mit Vorjahresvergleich<br>(periodisch)</div>
<div class="mi" style="top:83px;letter-spacing:0.35px">DB-Schema nach Einzelkunden<br><span style="letter-spacing:0.49px">(periodisch)</span></div>
</div>
</body></html>
